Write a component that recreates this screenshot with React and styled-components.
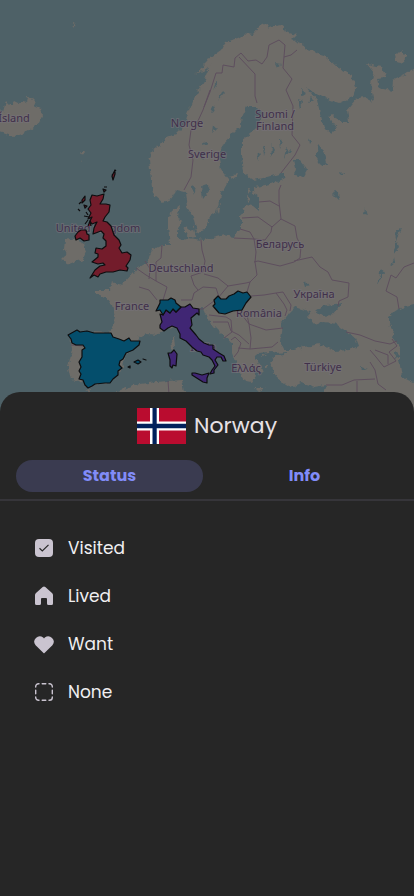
import React, { useState } from "react";
import styled, { createGlobalStyle } from "styled-components";

const GlobalStyle = createGlobalStyle`
  *, *::before, *::after { box-sizing: border-box; }
  body {
    margin: 0;
    background: #262626;
    font-family: Poppins, Inter, sans-serif;
  }
`;

const Page = styled.main`
  display: flex;
  flex-direction: column;
  min-height: 100vh;
`;

const MapView = styled.svg`
  display: block;
  flex: none;
  width: 100%;
  height: 416px;
  background: #4e6167;
`;

const Land = styled.g`
  fill: #6e6c68;
`;

const Water = styled.g`
  fill: #4e6167;
`;

const Borders = styled.g`
  fill: none;
  stroke: #5e4f5e;
  stroke-width: 1;
  stroke-linejoin: round;
`;

const Country = styled.path`
  fill: ${({ $fill }) => $fill};
  stroke: #0d0d0f;
  stroke-width: 1.2;
  stroke-linejoin: round;
`;

const MapLabel = styled.text`
  font-family: "Noto Sans", sans-serif;
  font-size: 11px;
  text-anchor: middle;
  fill: #40304a;
  stroke: #77727a;
  stroke-opacity: 0.6;
  stroke-width: 2px;
  paint-order: stroke;
`;

const Sheet = styled.section`
  position: relative;
  flex: 1;
  margin-top: -24px;
  border-radius: 20px 20px 0 0;
  background: #262626;
  color: #e6e1e5;
`;

const Header = styled.header`
  display: flex;
  align-items: center;
  justify-content: center;
  gap: 8px;
  padding: 16px 16px 0;
`;

const Flag = styled.svg`
  width: 49px;
  height: 36px;
`;

const Title = styled.h1`
  margin: 0;
  font-size: 22px;
  font-weight: 400;
  line-height: 36px;
`;

const Tabs = styled.div`
  display: grid;
  grid-template-columns: 1fr 1fr;
  gap: 8px;
  padding: 16px 16px 7px;
  border-bottom: 2px solid #36353a;
`;

const Tab = styled.button`
  height: 32px;
  padding: 0;
  border: 0;
  border-radius: 16px;
  background: ${({ $active }) => ($active ? "#3a3b50" : "transparent")};
  color: #818cf8;
  font: inherit;
  font-size: 16px;
  font-weight: 700;
  line-height: 32px;
  cursor: pointer;
`;

const Options = styled.div`
  display: flex;
  flex-direction: column;
  padding: 23px 16px;
`;

const Option = styled.button`
  display: flex;
  align-items: center;
  gap: 12px;
  height: 48px;
  padding: 0 16px;
  border: 0;
  background: transparent;
  color: #f0eff1;
  font: inherit;
  font-size: 17px;
  line-height: 24px;
  cursor: pointer;
`;

const Icon = styled.svg`
  width: 24px;
  height: 24px;
  fill: #cac4d0;
`;

const icons = {
  Visited: (
    <>
      <rect x="3" y="3" width="18" height="18" rx="4" />
      <path d="m7.500 12.300 2.800 2.700 6.200-6.200" fill="none" stroke="#262626" strokeWidth="1.200" />
    </>
  ),
  Lived: (
    <path d="M10.700 3.100a2 2 0 0 1 2.600 0l6.700 5.800a3 3 0 0 1 1 2.200v8.400a1.500 1.500 0 0 1-1.500 1.500h-3a1.500 1.500 0 0 1-1.500-1.500V15a1 1 0 0 0-1-1h-4a1 1 0 0 0-1 1v4.500A1.500 1.500 0 0 1 7.500 21h-3A1.500 1.500 0 0 1 3 19.500v-8.400a3 3 0 0 1 1-2.200z" />
  ),
  Want: (
    <path d="m12.800 5.600-.8.800-.8-.8a5.400 5.400 0 0 0-7.600 7.600l7.900 7.900a.7.700 0 0 0 1 0l7.900-7.900a5.400 5.400 0 0 0-7.600-7.600z" />
  ),
  None: (
    <g fill="none" stroke="#cac4d0" strokeWidth="1.400" strokeLinecap="round">
      <path d="M7 3.700H6.500A2.800 2.800 0 0 0 3.700 6.500V7M17 3.700h.5a2.800 2.800 0 0 1 2.800 2.800V7M7 20.300h-.5a2.800 2.800 0 0 1-2.800-2.800V17M17 20.300h.5a2.800 2.800 0 0 0 2.800-2.800V17" />
      <path d="M10.200 3.700h3.600M10.200 20.300h3.600M3.700 10.200v3.600M20.300 10.200v3.600" />
    </g>
  ),
};

const labels = [
  ["Ísland", 14, 122],
  ["Norge", 187, 127],
  ["Sverige", 207, 158],
  ["United Kingdom", 98, 232],
  ["Deutschland", 181, 272],
  ["Беларусь", 280, 248],
  ["France", 132, 310],
  ["Україна", 314, 298],
  ["România", 259, 317],
  ["Italia", 203, 351],
  ["Ελλάς", 246, 372],
  ["Türkiye", 323, 371],
];

const BLUE = "#044e6c";
const RED = "#731c2b";
const PURPLE = "#402674";

const mainland =
  "M153 194 151 180 149 160 153 150 160 145 167 137 176 134 182 128 186 120 188 113 191 105 193 100 200 88 205 80 209 70 204 64 211 57 221 50 226 42 231 40 239 38 247 33 253 34 259 27 267 23 270 28 276 26 282 25 285 32 297 35 292 40 304 45 307 50 324 55 337 67 351 75 356 87 352 97 339 103 324 98 307 88 317 100 321 117 324 128 332 133 337 128 329 117 332 115 341 122 349 122 347 110 357 98 366 97 371 103 374 98 371 83 374 73 367 64 381 67 387 77 377 78 379 88 392 91 393 80 404 75 414 68 430 60V430H324V390L326 385 314 387 301 383 291 388 282 382 276 377 272 367 270 362 274 357 279 355 271 352 257 353 254 358 261 365 264 373 253 369 256 376 251 383 246 382 241 374 237 367 232 353 232 343 224 337 214 327 207 317 203 308 192 312 180 325 163 330 157 335 147 334 138 337 139 342 126 355 122 366 117 377 108 384 95 384 88 387 80 381 71 380 68 367 72 350 70 335 90 332 110 333 115 317 112 305 107 298 95 293 95 290 110 290 112 282 122 285 133 273 137 268 147 262 152 250 162 245 170 245 168 227 168 217 173 210 180 205 178 217 182 224 177 231 177 237 183 240 188 238 203 240 212 238 224 235 234 237 241 230 241 215 246 205 254 206 259 210 259 197 252 192 256 187 274 183 286 177 282 173 268 177 254 180 244 173 242 155 242 140 250 134 257 127 264 113 257 107 247 107 242 117 241 125 233 133 224 143 219 157 221 170 229 180 222 193 216 212 209 217 205 229 197 233 193 217 187 207 185 192 177 190 171 199 163 203Z";

const uk =
  "M92 195 97 196 104 194 103 199 100 204 106 204 110 205 109 212 105 217 103 221 107 222 111 226 114 235 119 240 121 245 119 248 122 253 127 252 131 255 130 260 126 266 128 268 127 271 120 270 113 272 106 272 100 274 98 277 94 275 90 278 95 270 100 266 105 265 103 263 98 264 92 262 98 257 98 254 95 253 96 248 102 249 106 246 106 241 103 238 104 234 101 231 93 234 94 228 97 222 92 224 90 221 92 217 88 219 91 213 88 209 91 205 90 200Z";
const smallIsles =
  "M85 196 82 200 82 203 85 200ZM84 205 87 206 85 208ZM79 204 81 202M78 209 80 211M85 224 88 220M88 226 90 221 91 226M86 212 88 215M84 216 89 217M103 189 106 190 104 192ZM104 187 107 187M115 170 115 174 113 180 112 176ZM112 175 116 170";
const spain =
  "M68 335 77 330 80 332 87 331 94 333 111 333 113 337 119 339 124 341 129 338 131 341 140 341 139 345 133 350 126 353 123 359 120 361 119 365 122 368 118 371 118 375 113 379 110 383 105 383 95 384 92 386 88 388 85 385 83 380 79 379 81 374 79 371 81 367 79 362 82 357 82 350 85 348 83 345 76 345 72 343 71 339Z";
const italy =
  "M160 314 163 315 166 310 170 313 173 309 176 312 181 307 185 307 190 304 193 308 199 309 199 315 197 313 191 318 192 325 190 328 196 335 199 339 204 343 209 345 213 345 213 349 219 353 224 356 226 361 223 361 221 357 217 357 215 360 218 365 214 370 214 373 210 374 212 370 215 366 212 360 209 357 203 355 201 352 197 351 192 347 186 341 180 338 180 334 177 328 172 326 168 328 164 331 160 328 160 325 162 322Z";
const sicily = "M192 373 195 373 202 375 209 373 207 378 207 383 203 382 192 375Z";
const sardinia = "M168 353 171 353 174 350 177 354 176 366 173 365 172 368 170 366 170 360Z";
const switzerland =
  "M156 311 160 303 160 300 168 300 171 298 175 300 176 303 181 307 176 312 173 309 170 313 166 310 163 315 160 310Z";
const hungary =
  "M213 306 215 304 214 300 218 296 221 299 226 299 229 296 234 294 238 291 243 293 247 292 251 297 246 303 242 310 233 311 225 314 219 313Z";

const borderPaths = [
  "M204 107 210 92 216 73 222 73 223 65 234 67 235 58 241 53 248 61 256 60 262 64 267 57 269 45 279 40 285 45 283 68 292 79 286 90 293 106 292 135 300 145 295 155 281 173",
  "M284 57 291 55 297 50",
  "M239 57 255 74 255 96 257 103",
  "M210 90 203 110 197 123 191 130 189 145 193 160 191 177 184 190",
  "M281 185 279 190 279 202 281 219 272 227 258 217 242 218",
  "M259 202 270 201 279 206",
  "M272 226 271 232 265 240 254 239 250 232 240 229",
  "M281 219 295 226 297 238 301 246 300 258 294 262 280 266 258 261 254 262",
  "M234 238 254 239 256 252 255 262 257 275 250 282 247 292",
  "M294 261 312 257 320 267 328 272 332 280 349 283 348 297 339 301 338 306",
  "M201 240 202 250 205 261 203 272 191 276 194 285 198 290",
  "M204 274 218 278 228 286 246 283 250 282",
  "M162 245 161 258 156 262 156 281 167 287 163 300",
  "M136 268 146 275 156 281M145 261 150 269 149 279",
  "M181 300 192 300 194 293 203 287 216 288 219 297M218 298 203 309 196 309M228 286 218 298",
  "M251 296 264 295 276 293 284 304 287 310 285 316M276 293 283 292 291 305 290 311",
  "M246 311 249 324 266 330 283 328M242 315 249 324 251 338 250 349 272 347 278 342",
  "M209 315 226 317 231 320 232 332 224 338M213 322 228 322 231 331 239 335 249 344M231 340 235 337 241 343 238 352 234 357M238 348 250 349",
  "M346 332 360 335 375 341 390 344 397 341M370 350 376 357 384 367 396 361 389 352 397 346 392 339M375 350 388 355 388 364M370 362 375 370 378 384 386 390M326 385 342 385 354 380 375 379M357 381 357 392",
  "M414 263 404 267 396 278 391 275 386 291 397 297 399 309",
  "M71 345 83 346M168 381 169 394M157 300 149 290 139 287",
];

const waterPaths = [
  "M282 322 290 312 295 307 305 310 312 311 308 316 315 324 323 321 332 322 343 329 355 338 358 346 350 350 334 351 319 344 304 347 294 350 284 350 280 342Z",
  "M315 311 326 305 344 303 337 309 331 316 323 317Z",
  "M430 303 414 305 401 308 389 316 389 323 394 330 392 337 401 350 399 360 402 377 414 383 430 386Z",
  "M294 160 300 160 308 170 304 177 294 175 296 168Z",
  "M318 144 324 151 328 165 321 166 316 158Z",
  "M276 353 287 352 283 355 276 356Z",
  "M191 185 196 188 194 194ZM201 186 207 184 210 190 203 199Z",
  "M334 190 341 196 339 200 333 194ZM338 171 344 172 342 175Z",
  "M263 146 266 148 264 156ZM272 144 275 150 271 157ZM279 138 283 141 280 149ZM286 147 290 151 284 159ZM258 152 261 155 257 161Z",
  "M298 99 303 101 300 109ZM301 89 307 94 301 96ZM311 97 314 100 309 103ZM275 64 281 65 277 68ZM308 139 311 141 309 144Z",
  "M402 228 395 230 396 239 399 247 393 255 397 237ZM394 257 395 262 390 266ZM365 208 367 215 364 214ZM381 268 384 272 378 284ZM303 281 311 286 305 287ZM396 352 400 356 394 358ZM361 367 367 369 362 371Z",
  "M216 82 218 83 213 90ZM222 91 224 93 217 101ZM213 106 216 107 211 114ZM199 151 206 154 202 159ZM204 140 208 143 203 145ZM213 126 217 128 212 133Z",
];

function EuropeMap() {
  return (
    <MapView viewBox="0 0 414 416" preserveAspectRatio="xMidYMin slice" role="img" aria-label="Map of Europe">
      <defs>
        <filter
          id="coast"
          x="-20"
          y="-20"
          width="454"
          height="456"
          filterUnits="userSpaceOnUse"
          colorInterpolationFilters="sRGB"
        >
          <feTurbulence type="fractalNoise" baseFrequency="0.2" numOctaves="2" seed="4" />
          <feDisplacementMap in="SourceGraphic" scale="6" xChannelSelector="R" yChannelSelector="G" />
        </filter>
      </defs>
      <g filter="url(#coast)">
        <Land>
          <path d={mainland} />
          <path d="M-8 106 3 112 6 101 11 106 14 102 18 104 23 102 27 103 28 97 34 99 36 101 34 106 41 109 43 114 39 123 30 130 22 134 14 137 3 133-8 130Z" />
          <path d="M65 240 75 238 84 243 86 252 83 259 70 264 62 260 67 255 64 249Z" />
          <path d="M184 231 194 229 196 236 188 237ZM183 229 188 227 189 232Z" />
          <path d="M194 75 203 68 209 58 213 61 207 69Z" />
          <path d="M171 340 174 337 175 347 172 350Z" />
          <path d="M113 393 133 385 148 383 167 381 182 380 184 391 182 420H110Z" />
          <path d="M395 55 400 50 407 57 402 63 396 62Z" />
          <path d="M70 27 76 22 74 26ZM79 152 85 152 82 156ZM82 160 83 163 81 160Z" />
          <path d="M217 209 221 203 219 213ZM247 189 251 190 248 194ZM246 196 251 199 247 203ZM230 176 237 174 235 179Z" />
          <path d="M244 366 255 371 247 371ZM263 354 266 355 263 357ZM265 365 268 366 265 368ZM255 388 266 388 258 391Z" />
          <path d="M308 315 318 312 323 315 316 323ZM85 391 91 389 90 393Z" />
        </Land>
        <Water>
          {waterPaths.map((d) => (
            <path key={d} d={d} />
          ))}
        </Water>
      </g>
      <Borders>
        {borderPaths.map((d) => (
          <path key={d} d={d} />
        ))}
      </Borders>
      {labels.map(([name, x, y]) => (
        <MapLabel key={name} x={x} y={y}>
          {name}
        </MapLabel>
      ))}
      <MapLabel>
        <tspan x="275" y="118">Suomi /</tspan>
        <tspan x="275" y="130">Finland</tspan>
      </MapLabel>
      <Country $fill={RED} d={uk} />
      <Country $fill={RED} d="M75 236 78 232 81 230 86 230 87 234 89 235 89 240 84 241 80 238 76 240Z" />
      <Country $fill={RED} d={smallIsles} />
      <Country $fill={BLUE} d={spain} />
      <Country $fill={BLUE} d="M134 362 138 360 141 362 138 364ZM143 359 146 360ZM128 367 130 366 130 368Z" />
      <Country $fill={PURPLE} d={italy} />
      <Country $fill={PURPLE} d={sicily} />
      <Country $fill={PURPLE} d={sardinia} />
      <Country $fill={BLUE} d={switzerland} />
      <Country $fill={BLUE} d={hungary} />
    </MapView>
  );
}

function NorwayFlag() {
  return (
    <Flag viewBox="0 0 49 36" preserveAspectRatio="none" aria-hidden="true">
      <path fill="#ba0c2f" d="M0 0h49v36H0z" />
      <path fill="#fff" d="M13 0h9v36h-9zM0 13.500h49v9H0z" />
      <path fill="#00205b" d="M15.500 0h4.200v36h-4.200zM0 15.800h49v4.400H0z" />
    </Flag>
  );
}

export default function App() {
  const [tab, setTab] = useState("Status");
  return (
    <>
      <GlobalStyle />
      <Page>
        <EuropeMap />
        <Sheet>
          <Header>
            <NorwayFlag />
            <Title>Norway</Title>
          </Header>
          <Tabs role="tablist">
            {["Status", "Info"].map((name) => (
              <Tab
                key={name}
                type="button"
                role="tab"
                aria-selected={tab === name}
                $active={tab === name}
                onClick={() => setTab(name)}
              >
                {name}
              </Tab>
            ))}
          </Tabs>
          <Options>
            {Object.keys(icons).map((name) => (
              <Option key={name} type="button">
                <Icon viewBox="0 0 24 24" aria-hidden="true">
                  {icons[name]}
                </Icon>
                {name}
              </Option>
            ))}
          </Options>
        </Sheet>
      </Page>
    </>
  );
}
